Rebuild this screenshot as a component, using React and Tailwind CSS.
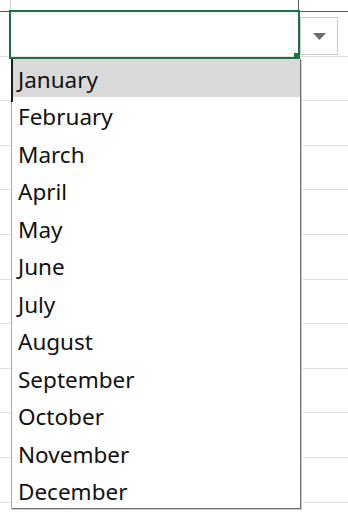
import React from "react";

const months = [
  "January",
  "February",
  "March",
  "April",
  "May",
  "June",
  "July",
  "August",
  "September",
  "October",
  "November",
  "December",
];

const gridRows = Array.from({ length: 11 }, (_, i) => i);

export default function App() {
  return (
    <div
      className="relative w-[348px] h-[512px] overflow-hidden bg-white"
      style={{ fontFamily: '"Noto Sans", "Open Sans", sans-serif' }}
    >
      {/* sheet grid */}
      <div className="flex flex-col">
        <div className="flex h-[12px] border-b border-[#5a5a5a]">
          <div className="w-[11px] border-r border-[#d4d4d4]" />
          <div className="w-[288px] border-r border-[#5a5a5a]" />
        </div>
        {gridRows.map((row) => (
          <div key={row} className="h-[44.6px] border-b border-[#e1e1e1]" />
        ))}
      </div>

      {/* active cell with its validation dropdown open */}
      <div className="absolute left-[9px] top-[10px] flex flex-col">
        <div className="flex items-start">
          <div className="relative w-[291px] h-[49px] border-2 border-[#1e7145]">
            <div className="absolute -right-[2px] -bottom-[2px] w-[6px] h-[6px] bg-[#1e7145]" />
          </div>
          <div className="mt-[7px] w-[38px] h-[38px] border border-[#c9c9c9] bg-white flex items-center justify-center">
            <svg width="13" height="7" viewBox="0 0 13 7">
              <polygon points="0,0 13,0 6.5,7" fill="#6b6b6b" />
            </svg>
          </div>
        </div>

        <div className="relative ml-[2px] w-[290px] h-[450px] flex flex-col bg-white border-l border-[#a8a8a8] border-r border-b border-r-[#6b6b6b] border-b-[#6b6b6b] shadow-[1px_1px_0_#d0d0d0]">
          <div className="absolute -left-[1px] top-0 w-[2px] h-[43px] bg-[#1a1a1a]" />
          {months.map((m, i) => (
            <div
              key={m}
              className={
                i === 0
                  ? "h-[37.5px] shrink-0 pl-[6px] pt-[4px] flex items-center bg-[#d9d9d9] text-[22.5px] text-[#111]"
                  : "h-[37.5px] shrink-0 pl-[6px] pt-[4px] flex items-center text-[22.5px] text-[#111]"
              }
            >
              {m}
            </div>
          ))}
        </div>
      </div>
    </div>
  );
}
